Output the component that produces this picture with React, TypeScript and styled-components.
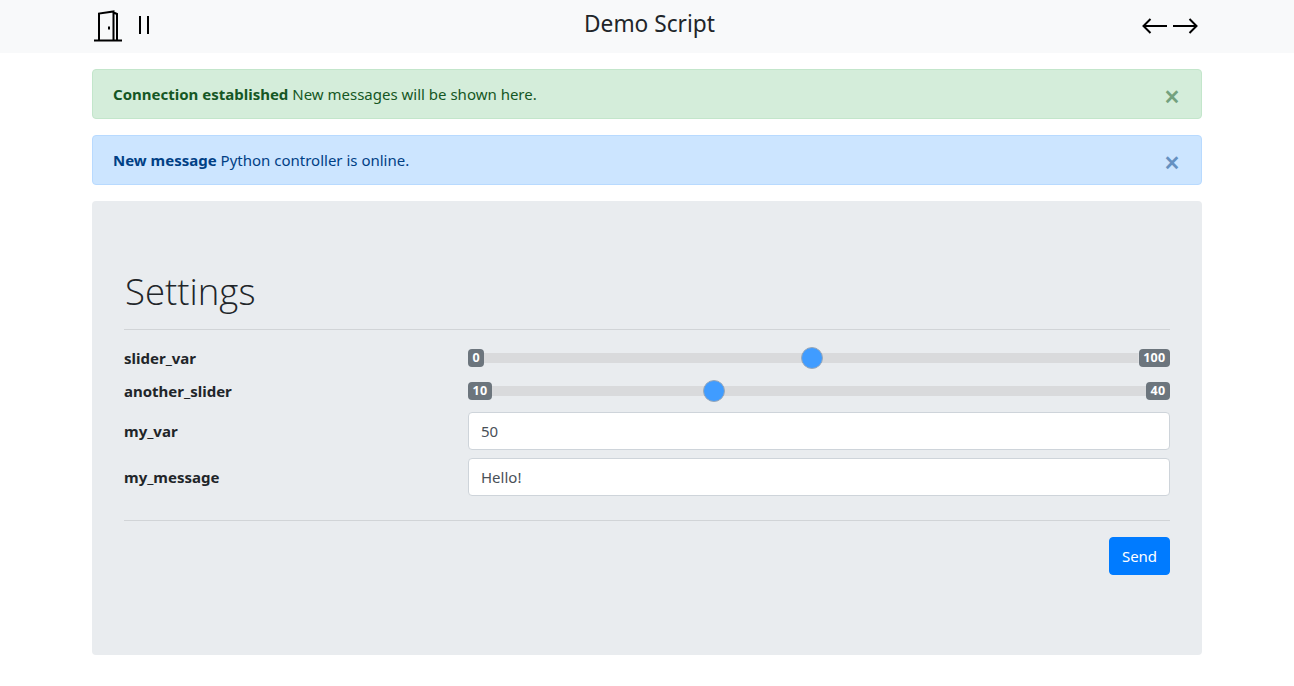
import React from 'react'
import styled, { createGlobalStyle } from 'styled-components'

const GlobalStyle = createGlobalStyle`
  * { box-sizing: border-box; }
  html, body { margin: 0; padding: 0; background: #fff; }
  body {
    font-family: "Noto Sans", "Open Sans", sans-serif;
    font-size: 16px;
    line-height: 24px;
    color: #212529;
  }
`

const Header = styled.header`
  height: 53px;
  background: #f8f9fa;
`

const HeaderInner = styled.div`
  width: 1110px;
  height: 100%;
  margin: 0 auto;
  display: grid;
  grid-template-columns: 1fr auto 1fr;
  align-items: center;
`

const IconGroup = styled.div<{ $end?: boolean }>`
  display: flex;
  align-items: center;
  justify-content: ${(p) => (p.$end ? 'flex-end' : 'flex-start')};
  padding: ${(p) => (p.$end ? '0 4px 2px 0' : '0 0 4px 1px')};
  gap: ${(p) => (p.$end ? '6px' : '15px')};
`

const Title = styled.h1`
  margin: 0 0 5px 5px;
  font-size: 22.7px;
  line-height: 32px;
  font-weight: 400;
`

const Icon = styled.svg`
  display: block;
  fill: none;
  stroke: #000;
`

const Main = styled.main`
  width: 1110px;
  margin: 16px auto 0;
  display: flex;
  flex-direction: column;
  gap: 16px;
`

const tones = {
  success: { bg: '#d4edda', border: '#c3e6cb', text: '#155724' },
  primary: { bg: '#cce5ff', border: '#b8daff', text: '#004085' },
}

const Alert = styled.div<{ $tone: keyof typeof tones }>`
  height: 50px;
  padding: 0 20px;
  display: flex;
  align-items: center;
  justify-content: space-between;
  background: ${(p) => tones[p.$tone].bg};
  border: 1px solid ${(p) => tones[p.$tone].border};
  border-radius: 4px;
  color: ${(p) => tones[p.$tone].text};
  font-size: 15px;
`

const AlertText = styled.div`
  margin-top: -1px;

  strong {
    font-weight: 700;
  }
`

const CloseButton = styled.button`
  padding: 0;
  margin: 3px 1px 0 0;
  border: 0;
  background: none;
  font-family: inherit;
  font-size: 28px;
  font-weight: 600;
  line-height: 24px;
  opacity: 0.5;
  color: inherit;
`

const Panel = styled.section`
  height: 454px;
  padding: 65px 32px 0;
  background: #e9ecef;
  border-radius: 4px;
`

const Heading = styled.h2`
  margin: 0 0 0 1px;
  font-size: 36.6px;
  line-height: 50px;
  height: 48px;
  font-weight: 300;
  font-family: "Open Sans", "Noto Sans", sans-serif;
`

const Divider = styled.hr<{ $gap: number }>`
  margin: ${(p) => p.$gap}px 0 0;
  border: 0;
  border-top: 1px solid #d1d4d7;
`

const Fields = styled.div`
  margin-top: 11px;
  display: flex;
  flex-direction: column;
`

const Field = styled.div<{ $height: number }>`
  display: grid;
  grid-template-columns: 344px 1fr;
  align-items: center;
  height: ${(p) => p.$height}px;
`

const Label = styled.label`
  font-size: 15px;
  font-weight: 700;
`

const SliderRow = styled.div`
  display: flex;
  align-items: center;
`

const Badge = styled.span`
  height: 18px;
  padding: 0 4.5px;
  background: #6c757d;
  border-radius: 4px;
  color: #fff;
  font-size: 12.5px;
  font-weight: 700;
  letter-spacing: 0.3px;
  line-height: 18px;
`

const Range = styled.input`
  flex: 1;
  min-width: 0;
  height: 22px;
  margin: 0;
  appearance: none;
  background: linear-gradient(#d9dadc, #d9dadc) center / 100% 10px no-repeat;

  &::-webkit-slider-thumb {
    appearance: none;
    width: 22px;
    height: 22px;
    border: 1px solid #9aa8b8;
    border-radius: 50%;
    background: #409cff;
  }
`

const TextInput = styled.input`
  width: 100%;
  height: 38px;
  padding: 0 12px;
  background: #fff;
  border: 1px solid #ced4da;
  border-radius: 4px;
  color: #495057;
  font-family: inherit;
  font-size: 15px;
`

const Actions = styled.div`
  margin-top: 16px;
  display: flex;
  justify-content: flex-end;
`

const SendButton = styled.button`
  width: 61px;
  height: 38px;
  padding: 0;
  background: #007bff;
  border: 1px solid #007bff;
  border-radius: 4px;
  color: #fff;
  font-family: inherit;
  font-size: 15px;
`

const DoorIcon = () => (
  <Icon width="30" height="34" viewBox="0 0 30 34" strokeWidth="2">
    <path d="M1 32.5h28M6 32V5.500L20.500 3.500V32M20.500 4.500l3.500 1.500V32" />
    <path d="M16 18.500v3" />
  </Icon>
)

const PauseIcon = () => (
  <Icon width="12" height="18" viewBox="0 0 12 18" strokeWidth="2">
    <path d="M2 0v18M10 0v18" />
  </Icon>
)

const ArrowLeftIcon = () => (
  <Icon width="25" height="16" viewBox="0 0 25 16" strokeWidth="2">
    <path d="M25 8H1.500M8.500 1L1.500 8l7 7" />
  </Icon>
)

const ArrowRightIcon = () => (
  <Icon width="25" height="16" viewBox="0 0 25 16" strokeWidth="2">
    <path d="M0 8h23.500M16.500 1l7 7-7 7" />
  </Icon>
)

const Slider = ({ min, max, value }: { min: number; max: number; value: number }) => (
  <SliderRow>
    <Badge>{min}</Badge>
    <Range type="range" min={min} max={max} defaultValue={value} />
    <Badge>{max}</Badge>
  </SliderRow>
)

const App = () => (
  <>
    <GlobalStyle />
    <Header>
      <HeaderInner>
        <IconGroup>
          <DoorIcon />
          <PauseIcon />
        </IconGroup>
        <Title>Demo Script</Title>
        <IconGroup $end>
          <ArrowLeftIcon />
          <ArrowRightIcon />
        </IconGroup>
      </HeaderInner>
    </Header>
    <Main>
      <Alert $tone="success">
        <AlertText>
          <strong>Connection established</strong> New messages will be shown here.
        </AlertText>
        <CloseButton>×</CloseButton>
      </Alert>
      <Alert $tone="primary">
        <AlertText>
          <strong>New message</strong> Python controller is online.
        </AlertText>
        <CloseButton>×</CloseButton>
      </Alert>
      <Panel>
        <Heading>Settings</Heading>
        <Divider $gap={15} />
        <Fields>
          <Field $height={33}>
            <Label>slider_var</Label>
            <Slider min={0} max={100} value={50} />
          </Field>
          <Field $height={34}>
            <Label>another_slider</Label>
            <Slider min={10} max={40} value={20} />
          </Field>
          <Field $height={46}>
            <Label>my_var</Label>
            <TextInput defaultValue="50" />
          </Field>
          <Field $height={46}>
            <Label>my_message</Label>
            <TextInput defaultValue="Hello!" />
          </Field>
        </Fields>
        <Divider $gap={20} />
        <Actions>
          <SendButton>Send</SendButton>
        </Actions>
      </Panel>
    </Main>
  </>
)

export default App
